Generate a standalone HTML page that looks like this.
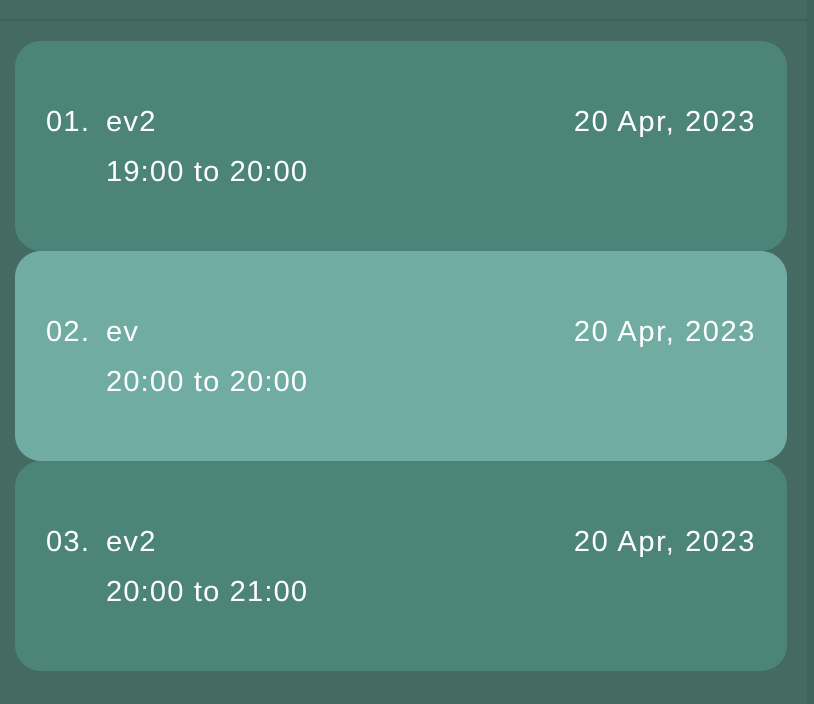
<!DOCTYPE html>
<html><head><style>
body{margin:0;width:814px;height:704px;background:#456a62;overflow:hidden;font-family:"Liberation Sans","DejaVu Sans",sans-serif;position:relative}
.top{position:absolute;left:0;top:0;width:814px;height:19px;background:#446a61;border-bottom:2px solid #3d6058}
.rs{position:absolute;right:0;top:0;width:7px;height:704px;background:#3f6259}
.card{position:absolute;left:15px;width:772px;height:210px;border-radius:26px;background:#4c8479;color:#fff;font-size:29px;letter-spacing:1.3px}
.card.hi{background:#71aca3}
.n{position:absolute;left:31px;top:65px}
.t{position:absolute;left:91px;top:65px}
.d{position:absolute;right:31px;top:65px;letter-spacing:1.6px}
.tm{position:absolute;left:91px;top:115px;letter-spacing:1.2px}
</style></head><body>
<div class="top"></div><div class="rs"></div>
<div class="card" style="top:41px"><span class="n">01.</span><span class="t">ev2</span><span class="d">20 Apr, 2023</span><span class="tm">19:00 to 20:00</span></div>
<div class="card hi" style="top:251px"><span class="n">02.</span><span class="t">ev</span><span class="d">20 Apr, 2023</span><span class="tm">20:00 to 20:00</span></div>
<div class="card" style="top:461px"><span class="n">03.</span><span class="t">ev2</span><span class="d">20 Apr, 2023</span><span class="tm">20:00 to 21:00</span></div>
</body></html>
